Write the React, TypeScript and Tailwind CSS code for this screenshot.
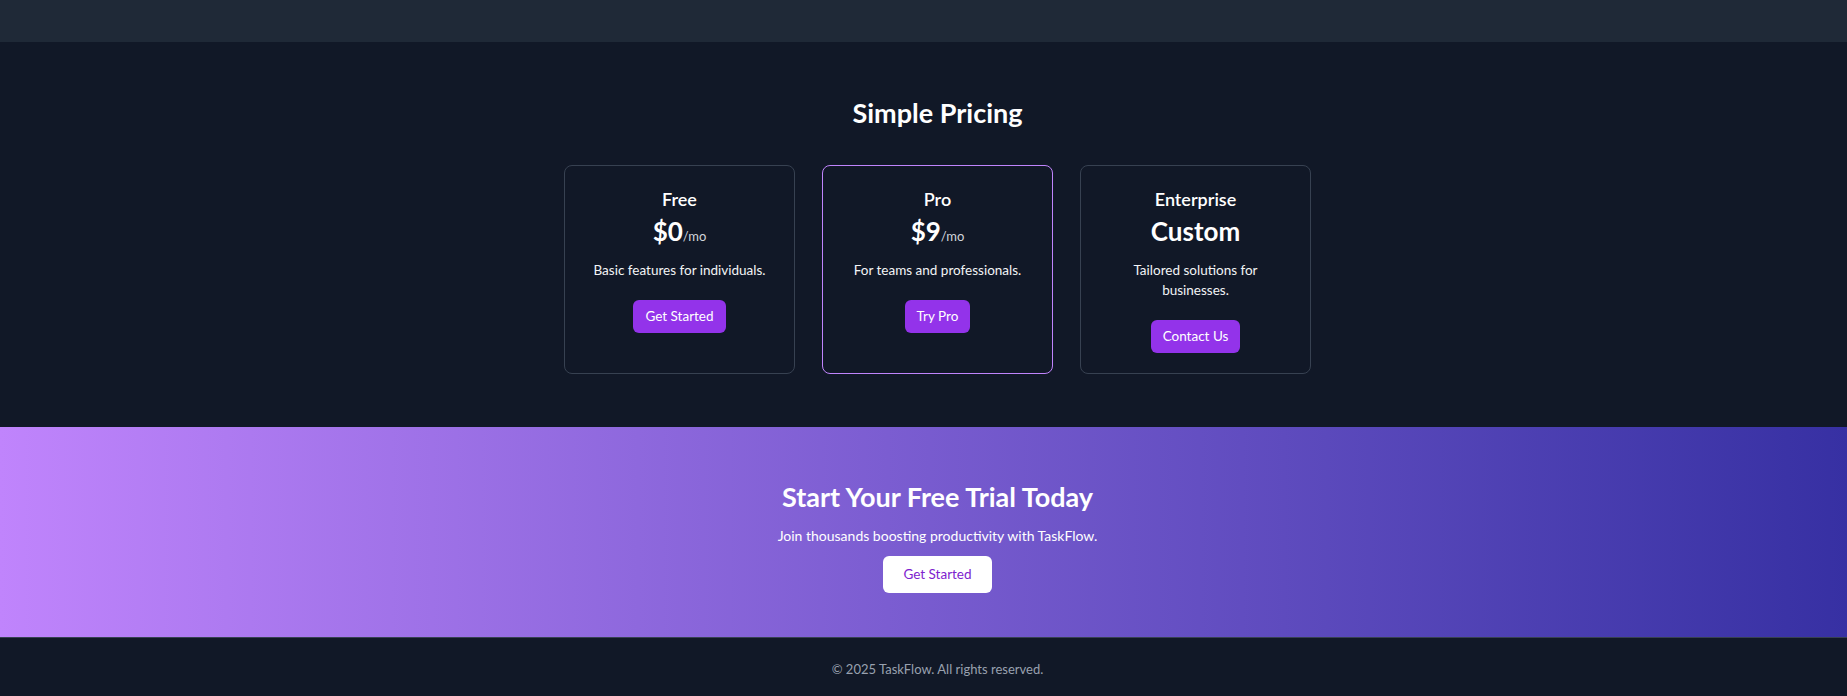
import React from "react";

type Plan = {
  name: string;
  price: string;
  per?: string;
  desc: string;
  cta: string;
  featured?: boolean;
};

const plans: Plan[] = [
  { name: "Free", price: "$0", per: "/mo", desc: "Basic features for individuals.", cta: "Get Started" },
  { name: "Pro", price: "$9", per: "/mo", desc: "For teams and professionals.", cta: "Try Pro", featured: true },
  { name: "Enterprise", price: "Custom", desc: "Tailored solutions for businesses.", cta: "Contact Us" },
];

const PlanCard: React.FC<{ plan: Plan }> = ({ plan }) => {
  return (
    <div
      className={
        plan.featured
          ? "w-[231px] rounded-lg border border-[#c084fc] px-5 pt-[19px] pb-5 flex flex-col items-center text-center"
          : "w-[231px] rounded-lg border border-[#374151] px-5 pt-[19px] pb-5 flex flex-col items-center text-center"
      }
    >
      <h3 className="text-lg leading-7 font-semibold text-white">{plan.name}</h3>
      <p className="h-9 text-[26px] leading-9 font-bold text-white">
        {plan.price}
        {plan.per && <span className="text-[13px] leading-none font-normal text-gray-300">{plan.per}</span>}
      </p>
      <p className="mt-[11px] text-[13.5px] leading-5 text-gray-100">{plan.desc}</p>
      <button className="mt-5 h-[33px] px-[12px] rounded-md bg-[#9333ea] text-[13.5px] text-white">{plan.cta}</button>
    </div>
  );
};

const App = () => {
  return (
    <div className="min-h-screen flex flex-col bg-[#111827] font-['Lato','Liberation_Sans',sans-serif]">
      <header className="h-[42px] bg-[#1f2937]"></header>

      <section className="h-[385px] pl-7 pt-[53px] flex flex-col items-center">
        <h2 className="text-[27px] leading-9 font-bold text-white">Simple Pricing</h2>
        <div className="mt-[34px] flex gap-[27px] items-stretch">
          {plans.map((p) => (
            <PlanCard key={p.name} plan={p} />
          ))}
        </div>
      </section>

      <section className="h-[210px] pl-7 pt-[52px] flex flex-col items-center bg-gradient-to-r from-[#c084fc] to-[#3730a3]">
        <h2 className="text-[27px] leading-9 font-bold text-white">Start Your Free Trial Today</h2>
        <p className="mt-[10px] text-[14px] leading-[22px] text-white">Join thousands boosting productivity with TaskFlow.</p>
        <button className="mt-[9px] h-[37px] px-[20px] rounded-md bg-white text-[13.5px] text-[#7e22ce]">Get Started</button>
      </section>

      <footer className="flex-1 border-t border-[#374151] pl-7 pt-[21px] flex justify-center">
        <p className="text-[13px] leading-5 text-gray-400">© 2025 TaskFlow. All rights reserved.</p>
      </footer>
    </div>
  );
};

export default App;
